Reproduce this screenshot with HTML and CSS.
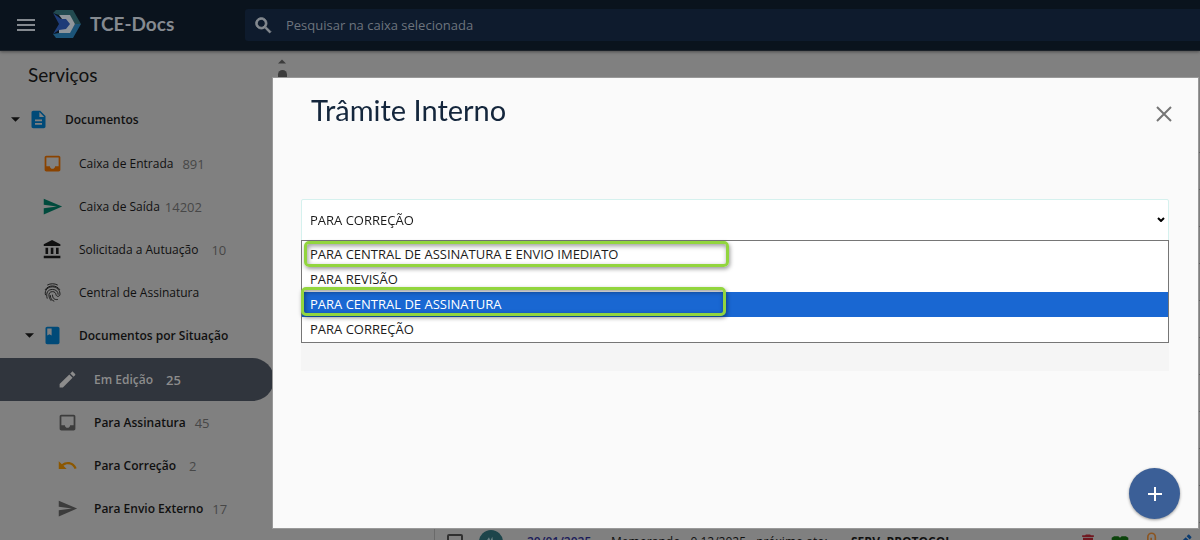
FILE: index.html
```html
<!DOCTYPE html>
<html lang="pt-BR">

<head>
    <meta charset="UTF-8" />
    <meta name="viewport" content="width=device-width, initial-scale=1.0" />
    <title>TCE-Docs</title>
    <link rel="stylesheet" href="styles.css">
</head>

<body>
    <!-- icons used more than once -->
    <svg class="sprite" aria-hidden="true">
        <symbol id="icon-inbox" viewBox="0 0 24 24">
            <path d="M19 3H5c-1.100 0-2 .9-2 2v14c0 1.100.9 2 2 2h14c1.100 0 2-.9 2-2V5c0-1.100-.9-2-2-2zm0 12h-4c0 1.660-1.350 3-3 3s-3-1.340-3-3H5V5h14v10z" />
        </symbol>
        <symbol id="icon-send" viewBox="0 0 24 24">
            <path d="M2.010 21L23 12 2.010 3 2 10l15 2-15 2z" />
        </symbol>
        <symbol id="icon-edit" viewBox="0 0 24 24">
            <path d="M3 17.250V21h3.750L17.810 9.940l-3.750-3.750L3 17.250zM20.710 7.040c.39-.39.39-1.020 0-1.410l-2.340-2.340c-.39-.39-1.020-.39-1.410 0l-1.830 1.830 3.750 3.750 1.830-1.830z" />
        </symbol>
        <symbol id="icon-caret" viewBox="0 0 10 5">
            <path d="M0 0h10L5 5z" />
        </symbol>
    </svg>

    <header class="topbar">
        <button class="menu-button" type="button" aria-label="Menu">
            <svg viewBox="0 0 18 12"><path d="M0 0h18v2H0zM0 5h18v2H0zM0 10h18v2H0z" /></svg>
        </button>
        <a class="brand" href="#">
            <svg class="brand-logo" viewBox="0 0 28 28" aria-hidden="true">
                <path fill="#224a50" d="M3 0h17l8 14h-6L16 5H6L0 3z" />
                <path fill="#1c5478" d="M28 14l-8 14H3l-3-4 6-1h10l6-9z" />
                <path fill="#1e3c78" d="M0 3l8 6h6l4 5-4 6H6l-6 4 6-10z" />
                <path fill="#8f969c" d="M6 5h11l5 9-5 9H6v-3l7-1 4-5-4-5H9z" />
            </svg>
            <span>TCE-Docs</span>
        </a>
        <div class="search">
            <svg viewBox="0 0 24 24" aria-hidden="true">
                <path d="M15.500 14h-.79l-.28-.27C15.410 12.590 16 11.110 16 9.500 16 5.910 13.090 3 9.500 3S3 5.910 3 9.500 5.910 16 9.500 16c1.610 0 3.090-.59 4.230-1.570l.27.28v.79l5 4.990L20.490 19l-4.990-5zm-6 0C7.010 14 5 11.990 5 9.500S7.010 5 9.500 5 14 7.010 14 9.500 11.990 14 9.500 14z" />
            </svg>
            <input type="text" aria-label="Pesquisar" placeholder="Pesquisar na caixa selecionada" />
        </div>
    </header>

    <div class="page">
        <aside class="sidebar">
            <h2>Serviços</h2>
            <nav>
                <a class="item root" href="#">
                    <svg class="caret"><use href="#icon-caret" /></svg>
                    <svg class="icon blue" viewBox="0 0 24 24"><path d="M14 2H6c-1.100 0-2 .9-2 2v16c0 1.100.9 2 2 2h12c1.100 0 2-.9 2-2V8l-6-6zm2 16H8v-2h8v2zm0-4H8v-2h8v2zm-3-5V3.500L18.500 9H13z" /></svg>
                    <span class="label">Documentos</span>
                </a>
                <div class="group">
                    <a class="item" href="#">
                        <svg class="icon orange"><use href="#icon-inbox" /></svg>
                        <span class="label">Caixa de Entrada</span><span class="count">891</span>
                    </a>
                    <a class="item" href="#">
                        <svg class="icon green"><use href="#icon-send" /></svg>
                        <span class="label">Caixa de Saída</span><span class="count near">14202</span>
                    </a>
                    <a class="item" href="#">
                        <svg class="icon" viewBox="0 0 24 24"><path d="M4 10v7h3v-7H4zm6 0v7h3v-7h-3zM2 22h19v-3H2v3zm14-12v7h3v-7h-3zm-4.500-9L2 6v2h19V6l-9.500-5z" /></svg>
                        <span class="label">Solicitada a Autuação</span><span class="count far">10</span>
                    </a>
                    <a class="item" href="#">
                        <svg class="icon finger" viewBox="0 0 24 24">
                            <path d="M6 3.500c4-2 8-2 12 0M3.500 9c4-6 13-6 17 0M4 15c-1.500-6 3-9.500 8-9.500s9 4 8.500 9c-.5 2.500-4 2.500-4.500 0-.3-2-1.500-3.500-4-3.500-3 0-4.500 2-4 5 .3 2 1 3.500 2.500 5.500M6 19c-2-7 1-10.500 6-10.500 4 0 6.500 2.500 6.500 6M12 14.500c0 4 2 6 6 5.500M9.500 15c0 3.500 1.500 6 4.500 7" />
                        </svg>
                        <span class="label">Central de Assinatura</span>
                    </a>
                    <a class="item parent" href="#">
                        <svg class="caret"><use href="#icon-caret" /></svg>
                        <svg class="icon blue" viewBox="0 0 24 24"><path d="M18 2H6c-1.100 0-2 .9-2 2v16c0 1.100.9 2 2 2h12c1.100 0 2-.9 2-2V4c0-1.100-.9-2-2-2zM6 4h5v8l-2.500-1.500L6 12V4z" /></svg>
                        <span class="label">Documentos por Situação</span>
                    </a>
                    <div class="group nested">
                        <a class="item active" href="#">
                            <svg class="icon"><use href="#icon-edit" /></svg>
                            <span class="label">Em Edição</span><span class="count far">25</span>
                        </a>
                        <a class="item" href="#">
                            <svg class="icon gray"><use href="#icon-inbox" /></svg>
                            <span class="label">Para Assinatura</span><span class="count">45</span>
                        </a>
                        <a class="item" href="#">
                            <svg class="icon amber" viewBox="0 0 24 24"><path d="M12.500 8c-2.650 0-5.050.99-6.900 2.600L2 7v9h9l-3.620-3.620c1.390-1.160 3.160-1.880 5.120-1.880 3.540 0 6.550 2.310 7.600 5.500l2.370-.78C21.080 11.030 17.150 8 12.500 8z" /></svg>
                            <span class="label">Para Correção</span><span class="count far">2</span>
                        </a>
                        <a class="item" href="#">
                            <svg class="icon gray"><use href="#icon-send" /></svg>
                            <span class="label">Para Envio Externo</span><span class="count">17</span>
                        </a>
                    </div>
                </div>
            </nav>
        </aside>

        <div class="scrollbar">
            <svg class="scroll-up" viewBox="0 0 10 5"><path d="M0 5h10L5 0z" /></svg>
            <div class="scroll-thumb"></div>
        </div>

        <main class="content">
            <div class="rows"></div>
            <div class="doc-row">
                <input type="checkbox" aria-label="Selecionar documento" />
                <span class="avatar">
                    <svg viewBox="0 0 24 24"><path d="M4 12l5-7 2 5 3-6 1 7 5 2-6 3-4 5z" /></svg>
                </span>
                <a class="doc-date" href="#">20/01/2025</a>
                <span class="doc-title">Memorando - 0.12/2025 - próximo ato:</span>
                <b class="doc-unit">SERV. PROTOCOL</b>
                <div class="doc-actions">
                    <svg class="red" viewBox="0 0 24 24"><path d="M6 19c0 1.100.9 2 2 2h8c1.100 0 2-.9 2-2V7H6v12zM19 4h-3.500l-1-1h-5l-1 1H5v2h14V4z" /></svg>
                    <svg class="leaf" viewBox="0 0 24 24"><path d="M2 7l3-2h5l2 2 2-2h5l3 2v8l-10 5-10-5z" /></svg>
                    <svg class="clip" viewBox="0 0 24 24"><path d="M7 20V6a4 4 0 0 1 9 0v11a3 3 0 0 1-5 0V7" /></svg>
                    <svg class="pen"><use href="#icon-edit" /></svg>
                </div>
            </div>
        </main>
    </div>

    <div class="modal" role="dialog" aria-labelledby="modal-title">
        <div class="modal-header">
            <h1 id="modal-title">Trâmite Interno</h1>
            <button class="close" type="button" aria-label="Fechar">
                <svg viewBox="0 0 16 16"><path d="M1 1l14 14M15 1L1 15" /></svg>
            </button>
        </div>
        <div class="field">
            <select aria-label="Tipo de trâmite">
                <option>PARA CORREÇÃO</option>
            </select>
            <svg class="chevron" viewBox="0 0 8 5"><path d="M1 1l3 3 3-3" /></svg>
            <ul class="options" role="listbox">
                <li role="option">PARA CENTRAL DE ASSINATURA E ENVIO IMEDIATO</li>
                <li role="option">PARA REVISÃO</li>
                <li role="option" class="selected" aria-selected="true">PARA CENTRAL DE ASSINATURA</li>
                <li role="option">PARA CORREÇÃO</li>
            </ul>
            <span class="mark mark-first"></span>
            <span class="mark mark-second"></span>
        </div>
        <div class="panel"></div>
        <button class="fab" type="button" aria-label="Adicionar">
            <svg viewBox="0 0 14 14"><path d="M6 0h2v6h6v2H8v6H6V8H0V6h6z" /></svg>
        </button>
    </div>
</body>

</html>
```

FILE: styles.css
```css
:root {
    --bar: #0a131d;
    --search: #0e1b2d;
    --page: #808080;
    --text: #101010;
    --muted: #474747;
    --blue: #004a78;
    --modal: #fafafa;
    --mark: #92d53e;
}

* {
    box-sizing: border-box;
}

body {
    margin: 0;
    height: 100vh;
    overflow: hidden;
    display: flex;
    flex-direction: column;
    background: var(--page);
    color: var(--text);
    font-family: "Open Sans", "Noto Sans", sans-serif;
    font-size: 12px;
}

a {
    color: inherit;
    text-decoration: none;
}

button {
    padding: 0;
    border: none;
    background: none;
    cursor: pointer;
}

svg {
    display: block;
    flex: none;
    fill: currentColor;
}

.sprite {
    position: absolute;
    width: 0;
    height: 0;
}

/* top bar */
.topbar {
    flex: none;
    height: 51px;
    display: flex;
    align-items: center;
    padding-left: 17px;
    background: var(--bar);
    border-bottom: 1px solid #1c2229;
    box-shadow: 0 1px 3px rgba(0, 0, 0, 0.4);
    color: #858a90;
}

.menu-button {
    color: inherit;
}

.menu-button svg {
    width: 18px;
    height: 12px;
}

.brand {
    width: 192px;
    margin-left: 18px;
    display: flex;
    align-items: center;
    gap: 9px;
    font-family: Lato, sans-serif;
    font-size: 19px;
    font-weight: bold;
    line-height: 20px;
    padding-bottom: 2px;
}

.brand-logo {
    width: 28px;
    height: 28px;
}

.search {
    flex: 1;
    height: 32px;
    display: flex;
    align-items: center;
    gap: 12px;
    padding-left: 8px;
    background: var(--search);
    border-radius: 3px 0 0 3px;
}

.search svg {
    width: 21px;
    height: 21px;
    stroke: currentColor;
}

.search input {
    flex: 1;
    padding: 0;
    border: none;
    outline: none;
    background: none;
    color: inherit;
    font: inherit;
    font-size: 13px;
}

.search input::placeholder {
    color: #6d747d;
}

/* sidebar */
.page {
    flex: 1;
    min-height: 0;
    display: flex;
}

.sidebar {
    width: 274px;
    flex: none;
}

.sidebar h2 {
    margin: 12px 0 11px 28px;
    font-family: Lato, sans-serif;
    font-size: 19px;
    font-weight: normal;
    line-height: 24px;
}

.item {
    height: 43px;
    display: flex;
    align-items: center;
    padding-left: 42px;
}

.item .icon {
    width: 21px;
    height: 21px;
    margin-right: 16px;
}

.item .caret {
    width: 9px;
    height: 5px;
    margin-right: 8px;
}

.item .label {
    white-space: nowrap;
}

.root {
    padding-left: 11px;
    font-weight: 600;
}

.parent {
    padding-left: 25px;
    font-weight: 600;
}

.group {
    margin-top: 1px;
}

.nested .item {
    padding-left: 57px;
    font-weight: 600;
}

.count {
    margin-left: 9px;
    color: var(--muted);
    font-size: 13px;
    font-weight: normal;
}

.count.near {
    margin-left: 5px;
}

.count.far {
    margin-left: 13px;
}

.nested .active {
    background: #30353d;
    border-radius: 0 22px 22px 0;
    color: #8c8c8c;
}

.active .count {
    color: inherit;
    font-weight: 600;
}

.blue {
    color: var(--blue);
}

.orange {
    color: #8a4300;
}

.green {
    color: #004b3d;
}

.gray {
    color: #3c3c3c;
}

.amber {
    color: #8c5700;
}

.finger {
    fill: none;
    stroke: currentColor;
    stroke-width: 1;
}

/* scroll bar beside the menu */
.scrollbar {
    width: 16px;
    flex: none;
    display: flex;
    flex-direction: column;
    align-items: center;
    gap: 6px;
    padding-top: 8px;
    color: #3c3c3c;
}

.scroll-up {
    width: 8px;
    height: 5px;
}

.scroll-thumb {
    width: 9px;
    height: 200px;
    border-radius: 5px;
    background: currentColor;
}

/* document list */
.content {
    flex: 1;
    min-width: 0;
    padding-top: 65px;
}

.rows {
    height: 408px;
    background: repeating-linear-gradient(transparent 0 36px, #606060 36px 37px);
}

.doc-row {
    height: 35px;
    margin-left: 144px;
    display: flex;
    align-items: center;
    padding-left: 12px;
    border-left: 1px solid #6a6a6a;
    white-space: nowrap;
}

.doc-row input {
    appearance: none;
    width: 16px;
    height: 16px;
    margin: 0 16px 0 0;
    border: 2px solid #303030;
    border-radius: 2px;
}

.avatar {
    width: 24px;
    height: 24px;
    margin-right: 24px;
    padding: 4px;
    border-radius: 50%;
    background: #1d454b;
    color: #6b8285;
}

.doc-date {
    width: 84px;
    color: #1a1a5a;
    font-weight: 600;
}

.doc-title {
    width: 240px;
}

.doc-unit {
    flex: 1;
}

.doc-actions {
    display: flex;
    gap: 12px;
    padding-right: 6px;
}

.doc-actions svg {
    width: 20px;
    height: 20px;
}

.red {
    color: #701820;
}

.leaf {
    color: #0c440c;
}

.doc-actions .clip {
    fill: none;
    stroke: #8c5520;
    stroke-width: 2;
}

.pen {
    color: #0c3c70;
}

/* dialog */
.modal {
    position: fixed;
    top: 78px;
    right: 2px;
    bottom: 12px;
    left: 273px;
    padding: 12px 29px 0 28px;
    background: var(--modal);
    box-shadow: 0 0 0 1px #999;
}

.modal-header {
    display: flex;
    align-items: center;
    justify-content: space-between;
    padding-left: 10px;
    margin-bottom: 69px;
}

.modal-header h1 {
    margin: 0;
    color: #14263c;
    font-family: Lato, sans-serif;
    font-size: 29px;
    font-weight: normal;
    line-height: 40px;
}

.close svg {
    width: 16px;
    height: 16px;
    margin: 8px -3px 0 0;
    fill: none;
    stroke: #757575;
    stroke-width: 2;
}

.field {
    position: relative;
    font-size: 13px;
}

.field select {
    appearance: none;
    display: block;
    width: 100%;
    height: 42px;
    padding: 0 8px;
    border: 1px solid #d5f1ee;
    border-radius: 2px 2px 0 0;
    background: #fff;
    color: #1c1c1c;
    font: inherit;
}

.chevron {
    position: absolute;
    top: 18px;
    right: 4px;
    width: 8px;
    height: 5px;
    fill: none;
    stroke: #000;
    stroke-width: 2;
}

.options {
    position: absolute;
    top: 41px;
    left: 0;
    right: 0;
    margin: 0;
    padding: 1px 0 0;
    list-style: none;
    background: #fff;
    border: 1px solid #767676;
    color: #1c1c1c;
}

.options li {
    padding: 0 8px;
    line-height: 25px;
}

.options .selected {
    background: #1967d2;
    color: #fff;
}

/* highlighted choices */
.mark {
    position: absolute;
    width: 49%;
    border: 3px solid var(--mark);
    border-radius: 5px;
    box-shadow: 1px 2px 4px rgba(0, 0, 0, 0.4), inset 1px 2px 5px rgba(0, 0, 0, 0.4);
}

.mark-first {
    top: 42px;
    left: 3px;
    height: 26px;
}

.mark-second {
    top: 88px;
    left: 0;
    height: 29px;
}

.panel {
    height: 130px;
    background: #f5f5f5;
}

.fab {
    position: absolute;
    right: 18px;
    bottom: 9px;
    width: 51px;
    height: 51px;
    display: flex;
    align-items: center;
    justify-content: center;
    border-radius: 50%;
    background: #3b5f97;
    box-shadow: 0 1px 3px rgba(0, 0, 0, 0.4);
    color: #fff;
}

.fab svg {
    width: 14px;
    height: 14px;
}
```
